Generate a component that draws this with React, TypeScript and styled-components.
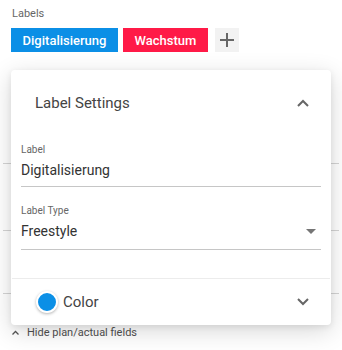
import styled, { createGlobalStyle } from 'styled-components';

const GlobalStyle = createGlobalStyle`
  html, body {
    margin: 0;
    padding: 0;
    background: #fff;
    font-family: Roboto, "Liberation Sans", sans-serif;
  }
`;

const Page = styled.div`
  position: relative;
  width: 342px;
  height: 350px;
  overflow: hidden;
  background: #fff;
`;

const SectionLabel = styled.div`
  padding: 7px 0 0 12px;
  height: 14px;
  font-size: 11px;
  line-height: 14px;
  color: #666;
`;

const ChipRow = styled.div`
  display: flex;
  align-items: center;
  gap: 5px;
  margin: 7px 0 0 11px;
`;

const Chip = styled.div<{ $color: string; $width: number }>`
  width: ${p => p.$width}px;
  height: 24px;
  display: flex;
  align-items: center;
  justify-content: center;
  background: ${p => p.$color};
  color: #fff;
  font-size: 13px;
  font-weight: 500;
`;

const AddButton = styled.button`
  width: 24px;
  height: 24px;
  margin-left: 2px;
  padding: 0;
  border: none;
  background: #f2f2f2;
  display: flex;
  align-items: center;
  justify-content: center;
`;

const BackgroundLine = styled.div<{ $top: number }>`
  margin: ${p => p.$top}px 3px 0;
  height: 1px;
  background: #d4d4d4;
`;

const ToggleRow = styled.div`
  display: flex;
  align-items: center;
  gap: 8px;
  margin: 32px 0 0 12px;
  font-size: 11px;
  color: #505050;
`;

const Card = styled.div`
  position: absolute;
  top: 70px;
  left: 11px;
  width: 320px;
  height: 255px;
  background: #fff;
  border-radius: 4px;
  box-shadow: 0 6px 24px rgba(0, 0, 0, 0.16), 0 2px 6px rgba(0, 0, 0, 0.08);
  display: flex;
  flex-direction: column;
`;

const CardHeader = styled.div`
  height: 66px;
  display: flex;
  align-items: center;
  justify-content: space-between;
  padding: 0 22px 0 24px;
  font-size: 15px;
  color: #444;
`;

const Fields = styled.div`
  padding: 0 10px;
`;

const Field = styled.div<{ $gap: number }>`
  margin-top: ${p => p.$gap}px;
  border-bottom: 1px solid #c6c6c6;
`;

const FieldLabel = styled.div`
  font-size: 10px;
  line-height: 12px;
  color: #666;
`;

const FieldValue = styled.div<{ $bottom: number }>`
  display: flex;
  align-items: center;
  justify-content: space-between;
  margin-top: 5px;
  padding-bottom: ${p => p.$bottom}px;
  font-size: 14px;
  line-height: 18px;
  color: #333;
`;

const Divider = styled.div`
  margin: 28px 1px 0;
  height: 1px;
  background: #ececec;
`;

const ColorRow = styled.div`
  flex: 1;
  display: flex;
  align-items: center;
  padding: 0 22px 0 25px;
  font-size: 15px;
  color: #444;
`;

const Swatch = styled.span<{ $color: string }>`
  width: 18px;
  height: 18px;
  border-radius: 50%;
  background: ${p => p.$color};
  border: 2px solid #fff;
  box-shadow: 0 1px 3px rgba(0, 0, 0, 0.3);
  margin-right: 5px;
`;

const Spacer = styled.span`
  flex: 1;
`;

const Chevron = ({ up }: { up?: boolean }) => (
  <svg width="12" height="8" viewBox="0 0 12 8">
    <polyline
      points={up ? '1,7 6,2 11,7' : '1,1 6,6 11,1'}
      fill="none"
      stroke="#666"
      strokeWidth="2"
    />
  </svg>
);

const App = () => (
  <Page>
    <GlobalStyle />
    <SectionLabel>Labels</SectionLabel>
    <ChipRow>
      <Chip $color="#0b8fe6" $width={107}>Digitalisierung</Chip>
      <Chip $color="#ff1a47" $width={85}>Wachstum</Chip>
      <AddButton>
        <svg width="14" height="14" viewBox="0 0 14 14">
          <path d="M7 0v14M0 7h14" stroke="#666" strokeWidth="2" />
        </svg>
      </AddButton>
    </ChipRow>
    <BackgroundLine $top={111} />
    <BackgroundLine $top={66} />
    <BackgroundLine $top={62} />
    <ToggleRow>
      <svg width="7" height="5" viewBox="0 0 7 5">
        <polyline points="0.5,4.5 3.5,1.5 6.5,4.5" fill="none" stroke="#555" strokeWidth="1.3" />
      </svg>
      Hide plan/actual fields
    </ToggleRow>

    <Card>
      <CardHeader>
        Label Settings
        <Chevron up />
      </CardHeader>
      <Fields>
        <Field $gap={8}>
          <FieldLabel>Label</FieldLabel>
          <FieldValue $bottom={7}>Digitalisierung</FieldValue>
        </Field>
        <Field $gap={18}>
          <FieldLabel>Label Type</FieldLabel>
          <FieldValue $bottom={9}>
            Freestyle
            <svg width="10" height="5" viewBox="0 0 10 5" style={{ marginRight: 5 }}>
              <path d="M0 0h10L5 5z" fill="#757575" />
            </svg>
          </FieldValue>
        </Field>
      </Fields>
      <Divider />
      <ColorRow>
        <Swatch $color="#0b8fe6" />
        Color
        <Spacer />
        <Chevron />
      </ColorRow>
    </Card>
  </Page>
);

export default App;
